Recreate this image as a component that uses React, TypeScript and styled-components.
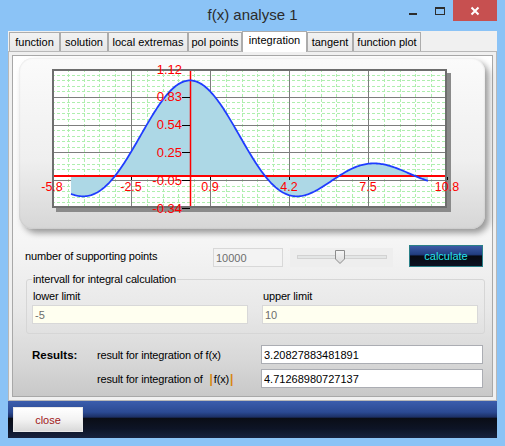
import * as React from 'react'
import styled, { createGlobalStyle, css } from 'styled-components'

// ______________________________________________________
//
// @ Global

const GlobalStyle = createGlobalStyle`
  html, body {
    margin: 0;
    padding: 0;
  }
  body {
    font-family: "Liberation Sans", Arial, sans-serif;
    font-size: 11px;
    color: #000;
  }
`

// ______________________________________________________
//
// @ Chart maths  (f(x) = sin(x) / x, integrated from -5 to 10)

const X0 = 52
const X1 = 447
const Y0 = 69
const Y1 = 208
const XMIN = -5.8
const XMAX = 10.8
const YMIN = -0.34
const YMAX = 1.12

const px = (x: number) => X0 + ((x - XMIN) / (XMAX - XMIN)) * (X1 - X0)
const py = (y: number) => Y0 + ((YMAX - y) / (YMAX - YMIN)) * (Y1 - Y0)
const f = (x: number) => (Math.abs(x) < 1e-9 ? 1 : Math.sin(x) / x)
const crisp = (v: number) => Math.round(v) + 0.5

const curve: string[] = []
for (let i = 0; i <= 300; i++) {
  const x = -5 + i * 0.05
  curve.push(`${px(x).toFixed(2)},${py(f(x)).toFixed(2)}`)
}
const curvePath = `M${curve.join(' L')}`
const fillPath = `M${px(-5).toFixed(2)},${py(0).toFixed(2)} L${curve.join(' L')} L${px(10).toFixed(2)},${py(0).toFixed(2)} Z`

const steps = Array.from({ length: 24 }, (_, i) => i + 1)
const minorX = steps.filter(k => k % 5 !== 0).map(k => X0 + (k * (X1 - X0)) / 25)
const minorY = steps.filter(k => k % 5 !== 0).map(k => Y0 + (k * (Y1 - Y0)) / 25)
const majorX = [5, 10, 15, 20].map(k => X0 + (k * (X1 - X0)) / 25)
const majorY = [5, 10, 15, 20].map(k => Y0 + (k * (Y1 - Y0)) / 25)

const yLabels = ['1.12', '0.83', '0.54', '0.25', '-0.05', '-0.34']
const xLabels = ['-5.8', '-2.5', '0.9', '4.2', '7.5', '10.8']

// ______________________________________________________
//
// @ Window frame

const Window = styled.div`
  width: 505px;
  height: 446px;
  background: #8bc3f6;
  display: flex;
  flex-direction: column;
  overflow: hidden;
`

const TitleBar = styled.div`
  flex: none;
  height: 31px;
  padding: 0 8px;
  display: grid;
  grid-template-columns: 1fr auto 1fr;
`

const Title = styled.div`
  font-size: 15px;
  line-height: 30px;
  color: #2b2b2b;
`

const Controls = styled.div`
  display: flex;
  justify-content: flex-end;
  align-items: flex-start;
`

const CtlButton = styled.div<{ $w: number; $close?: boolean }>`
  width: ${p => p.$w}px;
  height: 21px;
  display: flex;
  justify-content: center;
  align-items: flex-start;
  background: ${p => (p.$close ? '#c75050' : 'transparent')};
`

const MinGlyph = styled.span`
  width: 8px;
  height: 2px;
  margin-top: 13px;
  background: #2d2d2d;
`

const MaxGlyph = styled.span`
  width: 10px;
  height: 8px;
  margin-top: 7px;
  box-sizing: border-box;
  border: 1px solid #2d2d2d;
  border-top-width: 2px;
`

const CloseGlyph = styled.svg`
  margin-top: 6px;
`

const Client = styled.div`
  flex: 1;
  margin: 0 8px 8px;
  background: #f0f0f0;
  display: flex;
  flex-direction: column;
`

// ______________________________________________________
//
// @ Tabs

const TabStrip = styled.div`
  flex: none;
  height: 20px;
  padding-left: 1px;
  display: flex;
  align-items: flex-end;
`

const Tab = styled.div<{ $w: number; $active?: boolean }>`
  width: ${p => p.$w}px;
  height: 19px;
  box-sizing: border-box;
  border: 1px solid #acacac;
  border-bottom: none;
  background: linear-gradient(#f2f2f2, #e7e7e7);
  display: flex;
  justify-content: center;
  padding-top: 2px;
  line-height: 14px;
  white-space: nowrap;
  ${p =>
    p.$active &&
    css`
      height: 21px;
      margin-bottom: -1px;
      padding-top: 1px;
      background: #fff;
      position: relative;
      z-index: 1;
    `}
`

const TabPage = styled.div`
  flex: none;
  height: 350px;
  box-sizing: border-box;
  border: 1px solid #b8b8b8;
  padding: 3px;
  background: #f0f0f0;
`

const PageBody = styled.div`
  height: 100%;
  box-sizing: border-box;
  border: 1px solid #a8a8a8;
  background: linear-gradient(
    to bottom,
    #ffffff 0%,
    #f5f5f5 55%,
    #e8e8e8 75%,
    #d7d7d7 90%,
    #c8c8c8 100%
  );
  display: flex;
  flex-direction: column;
`

// ______________________________________________________
//
// @ Chart panel

const ChartPanel = styled.div`
  flex: none;
  margin: 2px 0 0 6px;
  width: 466px;
  height: 171px;
  box-sizing: border-box;
  padding: 4px 0 0 17px;
  border-radius: 14px;
  background: linear-gradient(to bottom, #fbfbfb 0%, #efefef 60%, #d6d6d6 100%);
  box-shadow: 4px 4px 6px rgba(0, 0, 0, 0.38), inset 0 0 2px rgba(0, 0, 0, 0.15);
`

const Chart = () => (
  <svg width={429} height={153} viewBox="36 62 429 153" style={{ display: 'block' }}>
    <rect x={56} y={73} width={395} height={139} fill="#8a8a8a" />
    <rect x={X0} y={Y0} width={X1 - X0} height={Y1 - Y0} fill="#fff" />
    {minorX.map(x => (
      <line key={`mx${x}`} x1={crisp(x)} x2={crisp(x)} y1={Y0} y2={Y1} stroke="#aeefae" strokeDasharray="3 2" />
    ))}
    {minorY.map(y => (
      <line key={`my${y}`} x1={X0} x2={X1} y1={crisp(y)} y2={crisp(y)} stroke="#aeefae" strokeDasharray="3 2" />
    ))}
    {majorX.map(x => (
      <line key={`Mx${x}`} x1={crisp(x)} x2={crisp(x)} y1={Y0} y2={Y1} stroke="#7d7d7d" />
    ))}
    {majorY.map(y => (
      <line key={`My${y}`} x1={X0} x2={X1} y1={crisp(y)} y2={crisp(y)} stroke="#7d7d7d" />
    ))}
    <path d={fillPath} fill="#add8e6" />
    <line x1={X0} x2={X1} y1={176} y2={176} stroke="#ff0000" strokeWidth={2} />
    <line x1={190.5} x2={190.5} y1={Y0} y2={Y1} stroke="#ff0000" strokeWidth={1.5} />
    {[Y0, ...majorY, Y1].map(y => (
      <line key={`ty${y}`} x1={182} x2={190} y1={crisp(y)} y2={crisp(y)} stroke="#000" />
    ))}
    {[...majorX, X1].map(x => (
      <line key={`tx${x}`} x1={crisp(x)} x2={crisp(x)} y1={177} y2={180} stroke="#000" />
    ))}
    <path d={curvePath} fill="none" stroke="#1f3dff" strokeWidth={1.8} />
    <rect x={53} y={70} width={393} height={137} fill="none" stroke="#6e6e6e" strokeWidth={2} />
    {yLabels.map((t, i) => (
      <text
        key={t}
        x={182}
        y={Y0 + (i * (Y1 - Y0)) / 5 + 4.6}
        textAnchor="end"
        fill="#ff0000"
        fontSize={13}
        fontFamily='"Liberation Sans", Arial, sans-serif'
      >
        {t}
      </text>
    ))}
    {xLabels.map((t, i) => (
      <text
        key={t}
        x={X0 + (i * (X1 - X0)) / 5}
        y={191}
        textAnchor="middle"
        fill="#ff0000"
        fontSize={12.5}
        fontFamily='"Liberation Sans", Arial, sans-serif'
      >
        {t}
      </text>
    ))}
  </svg>
)

// ______________________________________________________
//
// @ Controls row

const SupportRow = styled.div`
  flex: none;
  margin-top: 16px;
  padding-left: 12px;
  height: 22px;
  display: flex;
  align-items: flex-end;
`

const Label = styled.span<{ $w?: number }>`
  ${p => p.$w && `width: ${p.$w}px;`}
  flex: none;
  align-self: center;
  letter-spacing: -0.15px;
  white-space: nowrap;
  line-height: 14px;
`

const TextBox = styled.input<{ $tone: 'disabled' | 'ivory' | 'white'; $w: number }>`
  width: ${p => p.$w}px;
  height: 19px;
  box-sizing: border-box;
  margin: 0;
  padding: 0 2px;
  font: 11px "Liberation Sans", Arial, sans-serif;
  outline: none;
  border: 1px solid ${p => (p.$tone === 'white' ? '#abadb3' : '#d8d8d8')};
  color: ${p => (p.$tone === 'white' ? '#000' : '#6d6d6d')};
  background: ${p => (p.$tone === 'white' ? '#fff' : p.$tone === 'ivory' ? '#fffff0' : '#f3f3f3')};
`

const Slider = styled.div`
  flex: none;
  margin-left: 7px;
  width: 103px;
  height: 19px;
  box-sizing: border-box;
  padding: 0 6px 0 7px;
  background: #eeeeee;
  display: flex;
  align-items: center;
`

const Track = styled.div`
  flex: 1;
  height: 4px;
  margin-top: -2px;
  box-sizing: border-box;
  border: 1px solid #d2d2d2;
  background: #e4e6e6;
  position: relative;
`

const Thumb = styled.svg<{ $at: number }>`
  position: absolute;
  left: ${p => p.$at}px;
  top: -6px;
`

const CalcButton = styled.button`
  flex: none;
  margin: 0 0 0 16px;
  width: 74px;
  height: 22px;
  padding: 0;
  box-sizing: border-box;
  border: 1px solid #2a8088;
  background: linear-gradient(
    to bottom,
    #3c5ba6 0%,
    #223e80 42%,
    #0f1a38 48%,
    #070a12 52%,
    #0c1222 100%
  );
  color: #27e6ef;
  font: 11px "Liberation Sans", Arial, sans-serif;
`

// ______________________________________________________
//
// @ Interval group

const GroupBox = styled.fieldset`
  flex: none;
  margin: 6px 0 0 13px;
  width: 459px;
  min-inline-size: 0;
  box-sizing: border-box;
  padding: 0 6px 9px 5px;
  border: 1px solid #d6d6d6;
  border-radius: 3px;
  display: grid;
  grid-template-columns: 216px 216px;
  column-gap: 14px;
`

const Legend = styled.legend`
  padding: 0 1px;
  line-height: 13px;
  letter-spacing: -0.15px;
`

const Field = styled.div`
  display: flex;
  flex-direction: column;
  align-items: flex-start;
`

const FieldLabel = styled.span`
  margin: 3px 0 2px 1px;
  line-height: 14px;
  letter-spacing: -0.15px;
`

// ______________________________________________________
//
// @ Results

const Results = styled.div`
  flex: none;
  margin: 11px 0 0 19px;
  display: grid;
  grid-template-columns: 65px 164px 222px;
  grid-auto-rows: 19px;
  row-gap: 5px;
  align-items: center;
`

const ResultsTitle = styled.span`
  font-weight: bold;
  font-size: 11.5px;
`

const Bar = styled.span`
  color: #d8860f;
  font-weight: bold;
  font-size: 12px;
  padding: 0 1px;
`

// ______________________________________________________
//
// @ Bottom bar

const BottomBar = styled.div`
  flex: 1;
  padding: 6px 0 0 5px;
  background: linear-gradient(
    to bottom,
    #3b5dad 0%,
    #2b4a93 30%,
    #1b2e62 44%,
    #0a0d16 46%,
    #0d1426 75%,
    #17223e 100%
  );
`

const CloseButton = styled.button`
  width: 70px;
  height: 25px;
  padding: 0;
  box-sizing: border-box;
  border: 1px solid #e9e9e9;
  background: linear-gradient(to bottom, #ffffff 0%, #f3f3f3 50%, #d9d9d9 100%);
  color: #a01818;
  font: 11px "Liberation Sans", Arial, sans-serif;
`

// ______________________________________________________
//
// @ App

const tabs = [
  { label: 'function', w: 51 },
  { label: 'solution', w: 48 },
  { label: 'local extremas', w: 80 },
  { label: 'pol points', w: 54 },
  { label: 'integration', w: 65, active: true },
  { label: 'tangent', w: 46 },
  { label: 'function plot', w: 68 },
]

export default function App() {
  return (
    <>
      <GlobalStyle />
      <Window>
        <TitleBar>
          <span />
          <Title>f(x) analyse 1</Title>
          <Controls>
            <CtlButton $w={26}>
              <MinGlyph />
            </CtlButton>
            <CtlButton $w={27}>
              <MaxGlyph />
            </CtlButton>
            <CtlButton $w={44} $close>
              <CloseGlyph width={10} height={10} viewBox="0 0 10 10">
                <path d="M1.5 1.5 L8.5 8.5 M8.5 1.5 L1.5 8.5" stroke="#fff" strokeWidth={2} />
              </CloseGlyph>
            </CtlButton>
          </Controls>
        </TitleBar>
        <Client>
          <TabStrip>
            {tabs.map(t => (
              <Tab key={t.label} $w={t.w} $active={t.active}>
                {t.label}
              </Tab>
            ))}
          </TabStrip>
          <TabPage>
            <PageBody>
              <ChartPanel>
                <Chart />
              </ChartPanel>
              <SupportRow>
                <Label $w={188}>number of supporting points</Label>
                <TextBox $tone="disabled" $w={70} value="10000" readOnly disabled />
                <Slider>
                  <Track>
                    <Thumb $at={37} width={10} height={14} viewBox="0 0 10 14">
                      <defs>
                        <linearGradient id="thumbGrad" x1="0" y1="0" x2="0" y2="1">
                          <stop offset="0" stopColor="#f6f6f6" />
                          <stop offset="1" stopColor="#dadada" />
                        </linearGradient>
                      </defs>
                      <path d="M0.5 0.5 H9.5 V9 L5 13.5 L0.5 9 Z" fill="url(#thumbGrad)" stroke="#8c8c8c" />
                    </Thumb>
                  </Track>
                </Slider>
                <CalcButton>calculate</CalcButton>
              </SupportRow>
              <GroupBox>
                <Legend>intervall for integral calculation</Legend>
                <Field>
                  <FieldLabel>lower limit</FieldLabel>
                  <TextBox $tone="ivory" $w={216} value="-5" readOnly />
                </Field>
                <Field>
                  <FieldLabel>upper limit</FieldLabel>
                  <TextBox $tone="ivory" $w={216} value="10" readOnly />
                </Field>
              </GroupBox>
              <Results>
                <ResultsTitle>Results:</ResultsTitle>
                <Label>result for integration of f(x)</Label>
                <TextBox $tone="white" $w={222} value="3.20827883481891" readOnly />
                <span />
                <Label>
                  result for integration of&nbsp; <Bar>|</Bar>f(x)<Bar>|</Bar>
                </Label>
                <TextBox $tone="white" $w={222} value="4.71268980727137" readOnly />
              </Results>
            </PageBody>
          </TabPage>
          <BottomBar>
            <CloseButton>close</CloseButton>
          </BottomBar>
        </Client>
      </Window>
    </>
  )
}
